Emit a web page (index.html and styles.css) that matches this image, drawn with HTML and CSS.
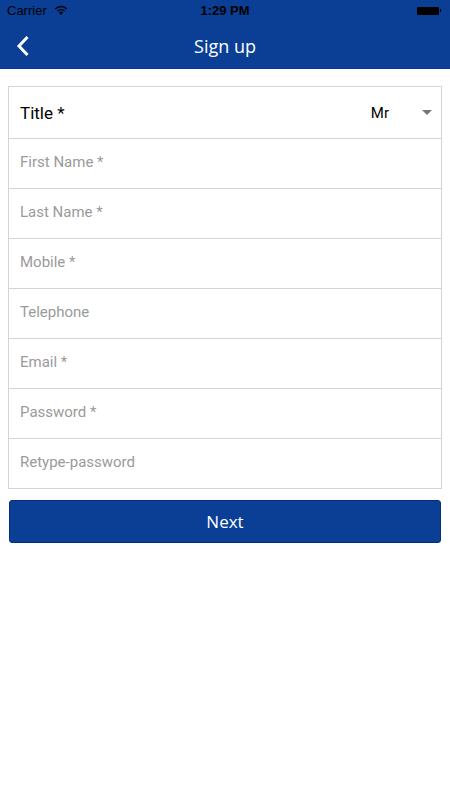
FILE: index.html
```html
<!DOCTYPE html>
<html lang="en">
<head>
  <meta charset="UTF-8">
  <title>Sign up</title>
  <link rel="stylesheet" href="styles.css">
</head>
<body>
<div class="header">
  <div class="status">
    <div class="status-left">
      <span>Carrier</span>
      <svg class="wifi" width="14" height="10" viewBox="0 0 14 10">
        <path d="M7 10 L4.8 7.6 A3.2 3.2 0 0 1 9.2 7.6 Z" fill="#000"/>
        <path d="M2.9 5.6 A5.8 5.8 0 0 1 11.1 5.6 L10.1 6.6 A4.4 4.4 0 0 0 3.9 6.6 Z" fill="#000"/>
        <path d="M0.8 3.4 A8.8 8.8 0 0 1 13.2 3.4 L12.2 4.5 A7.4 7.4 0 0 0 1.8 4.5 Z" fill="#000"/>
      </svg>
    </div>
    <div class="status-time">1:29 PM</div>
    <div class="status-right">
      <span class="battery"></span><span class="nub"></span>
    </div>
  </div>
  <div class="nav">
    <svg class="back" width="14" height="22" viewBox="0 0 14 22">
      <path d="M11.5 2 L3 11 L11.5 20" fill="none" stroke="#fff" stroke-width="3"/>
    </svg>
    <div class="nav-title">Sign up</div>
  </div>
</div>

<div class="form">
  <div class="row row-title">
    <span class="label">Title *</span>
    <span class="select">Mr <span class="caret"></span></span>
  </div>
  <div class="row">First Name *</div>
  <div class="row">Last Name *</div>
  <div class="row">Mobile *</div>
  <div class="row">Telephone</div>
  <div class="row">Email *</div>
  <div class="row">Password *</div>
  <div class="row">Retype-password</div>
</div>

<div class="btn">Next</div>
</body>
</html>
```

FILE: styles.css
```css
* {
  padding: 0;
  margin: 0;
  box-sizing: border-box;
}

body {
  width: 450px;
  height: 800px;
  background: #fff;
  font-family: Roboto, "Liberation Sans", sans-serif;
}

.header {
  background: #0a3f95;
  border-bottom: 1px solid #0a36a8;
}

.status {
  height: 21px;
  display: flex;
  align-items: center;
  justify-content: space-between;
  padding: 0 9px 0 7px;
  font-family: "Liberation Sans", Arial, sans-serif;
  font-size: 13px;
  color: #000;
  position: relative;
}

.status-left {
  display: flex;
  align-items: center;
  gap: 7px;
}

.wifi {
  margin-top: -2px;
}

.status-time {
  position: absolute;
  left: 0;
  right: 0;
  text-align: center;
  font-weight: bold;
}

.status-right {
  display: flex;
  align-items: center;
}

.battery {
  display: block;
  width: 22px;
  height: 8px;
  background: #000;
  border-radius: 1px;
}

.nub {
  display: block;
  width: 1px;
  height: 3px;
  margin-left: 1px;
  background: #000;
}

.nav {
  height: 47px;
  display: flex;
  align-items: center;
  justify-content: center;
  position: relative;
}

.back {
  position: absolute;
  left: 16px;
  top: 14px;
}

.nav-title {
  font-family: "Open Sans", sans-serif;
  font-size: 18px;
  color: #fff;
  margin-top: 3px;
}

.form {
  margin: 17px 8px 0;
  border: 1px solid #d4d4d4;
}

.row {
  height: 50px;
  border-top: 1px solid #d4d4d4;
  padding: 0 11px 4px;
  display: flex;
  align-items: center;
  font-size: 15px;
  color: #9a9a9a;
}

.row-title {
  height: 51px;
  border-top: 0;
  justify-content: space-between;
  padding: 0 9px 0 11px;
  color: #000;
}

.row-title .label {
  font-size: 17px;
}

.select {
  display: flex;
  align-items: center;
  font-size: 15px;
}

.caret {
  width: 0;
  height: 0;
  border-left: 5px solid transparent;
  border-right: 5px solid transparent;
  border-top: 5px solid #777;
  margin-left: 33px;
}

.btn {
  margin: 11px 9px 0;
  height: 43px;
  background: #0a3f95;
  border: 1px solid #062f7a;
  border-radius: 3px;
  color: #fff;
  font-family: "Open Sans", sans-serif;
  font-size: 17px;
  display: flex;
  align-items: center;
  justify-content: center;
}
```
